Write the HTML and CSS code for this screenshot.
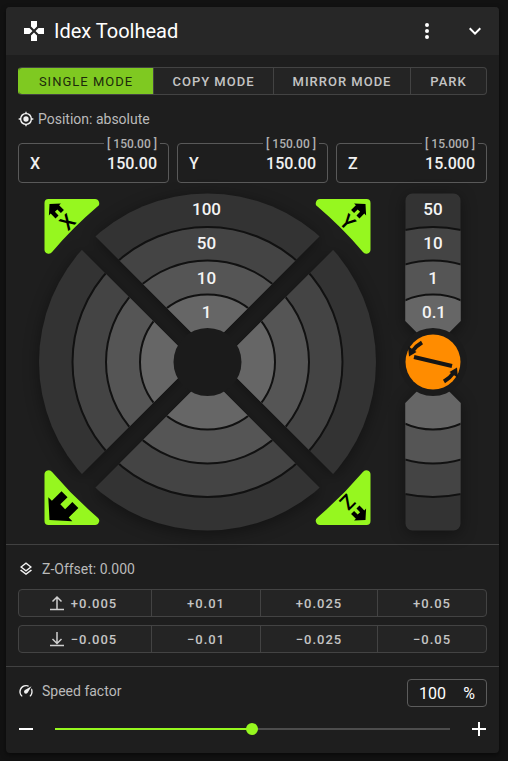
FILE: index.html
```html
<!DOCTYPE html>
<html lang="en">
<head>
<meta charset="utf-8">
<meta name="viewport" content="width=device-width, initial-scale=1">
<title>Idex Toolhead</title>
<link rel="stylesheet" href="styles.css">
</head>
<body>
<main class="card">
  <header class="card-header">
    <svg class="icon-pad" viewBox="0 0 24 24" aria-hidden="true"><path d="M16.5 9 13.5 12l3 3H22V9M9 16.500V22h6v-5.500l-3-3M7.500 9H2v6h5.500l3-3M15 7.500V2H9v5.500l3 3Z"/></svg>
    <h1>Idex Toolhead</h1>
    <button class="icon-btn" type="button" aria-label="More options"><svg viewBox="0 0 24 24"><path d="M12 16a2 2 0 1 1 0 4 2 2 0 0 1 0-4m0-6a2 2 0 1 1 0 4 2 2 0 0 1 0-4m0-6a2 2 0 1 1 0 4 2 2 0 0 1 0-4"/></svg></button>
    <button class="icon-btn" type="button" aria-label="Collapse"><svg viewBox="0 0 24 24"><path d="M7.410 8.580 12 13.170l4.590-4.590L18 10l-6 6-6-6z"/></svg></button>
  </header>

  <section class="section">
    <div class="group modes">
      <button class="active" type="button">SINGLE MODE</button>
      <button type="button">COPY MODE</button>
      <button type="button">MIRROR MODE</button>
      <button type="button">PARK</button>
    </div>
    <p class="caption position">
      <svg viewBox="0 0 24 24" aria-hidden="true"><path d="M12 8a4 4 0 1 0 0 8 4 4 0 0 0 0-8m-8.950 5H1v-2h2.050A9 9 0 0 1 11 3.050V1h2v2.050A9 9 0 0 1 20.950 11H23v2h-2.050A9 9 0 0 1 13 20.950V23h-2v-2.050A9 9 0 0 1 3.050 13M12 5a7 7 0 1 0 0 14 7 7 0 0 0 0-14"/></svg>
      Position: absolute
    </p>
    <div class="fields">
      <label class="field"><span>X</span><input value="150.00"><small>[ 150.00 ]</small></label>
      <label class="field"><span>Y</span><input value="150.00"><small>[ 150.00 ]</small></label>
      <label class="field"><span>Z</span><input value="15.000"><small>[ 15.000 ]</small></label>
    </div>

    <div class="jog">
      <svg class="jog-xy" viewBox="-169.500 -170 339 340" role="group" aria-label="X and Y jog control">
        <defs>
          <clipPath id="wedge"><path d="M0-13.500-160-173.500H160Z"/></clipPath>
          <g id="rings">
            <g clip-path="url(#wedge)">
              <circle class="ring ring-4" r="168.500"/>
              <circle class="ring ring-3" r="135"/>
              <circle class="ring ring-2" r="101.500"/>
              <circle class="ring ring-1" r="67.500"/>
            </g>
          </g>
          <path id="corner" d="M-163-159a4 4 0 0 1 4-4h46.500a4.200 4.200 0 0 1 2.500 7.600A400 400 0 0 0-155.400-110a4.200 4.200 0 0 1-7.600-2.500Z"/>
          <path id="home" d="M10 20v-6h4v6h5v-8h3L12 3 2 12h3v8Z"/>
        </defs>
        <g class="shadow">
          <use href="#rings"/>
          <use href="#rings" transform="rotate(90)"/>
          <use href="#rings" transform="rotate(180)"/>
          <use href="#rings" transform="rotate(270)"/>
        </g>
        <circle class="hole" r="34"/>
        <g class="steps">
          <text x="-1" y="-147">100</text>
          <text x="-1" y="-113">50</text>
          <text x="-1" y="-78">10</text>
          <text x="-1" y="-44">1</text>
        </g>
        <g class="homing" role="button" aria-label="Home X">
          <use class="corner" href="#corner"/>
          <use href="#home" transform="translate(-158 -158) rotate(-45) scale(.85) translate(-12 -3)"/>
          <text transform="translate(-140 -140) rotate(-45)" y="7">X</text>
        </g>
        <g class="homing" role="button" aria-label="Home Y">
          <use class="corner" href="#corner" transform="rotate(90)"/>
          <use href="#home" transform="translate(158 -158) rotate(45) scale(.85) translate(-12 -3)"/>
          <text transform="translate(140 -140) rotate(45)" y="7">Y</text>
        </g>
        <g class="homing" role="button" aria-label="Home Z">
          <use class="corner" href="#corner" transform="rotate(180)"/>
          <use href="#home" transform="translate(158 158) rotate(135) scale(.85) translate(-12 -3)"/>
          <text transform="translate(140 140) rotate(135)" y="7">Z</text>
        </g>
        <g class="homing" role="button" aria-label="Home all">
          <use class="corner" href="#corner" transform="rotate(270)"/>
          <use href="#home" transform="translate(-158 158) rotate(225) scale(1.700) translate(-12 -3)"/>
        </g>
      </svg>

      <svg class="jog-z" viewBox="-29 -170 63 340" role="group" aria-label="Z jog control">
        <defs>
          <clipPath id="column"><path d="M0-13.500-27.500-41V-161.500a7 7 0 0 1 7-7h41a7 7 0 0 1 7 7V-41Z"/></clipPath>
          <g id="column-steps">
            <g clip-path="url(#column)">
              <rect class="ring ring-4" x="-30" y="-169" width="60" height="169"/>
              <circle class="ring ring-3" r="135"/>
              <circle class="ring ring-2" r="101.500"/>
              <circle class="ring ring-1" r="67.500"/>
            </g>
          </g>
        </defs>
        <g class="shadow">
          <use href="#column-steps"/>
          <use href="#column-steps" transform="rotate(180)"/>
        </g>
        <circle class="hole" r="34"/>
        <g class="steps">
          <text y="-147">50</text>
          <text y="-113">10</text>
          <text y="-78">1</text>
          <text x="1" y="-44">0.1</text>
        </g>
        <g class="tilt" role="button" aria-label="Z tilt adjust">
          <circle r="27.500"/>
          <path class="bar" d="M-19-5 19 4"/>
          <g id="turn">
            <path class="curve" d="M-11-19.500Q-17-16-20-11.500"/>
            <path class="head" d="M-25-16-16.500-10-24-5.500Z"/>
          </g>
          <use href="#turn" transform="rotate(180)"/>
        </g>
      </svg>
    </div>
  </section>

  <section class="section offsets">
    <p class="caption">
      <svg viewBox="0 0 24 24" aria-hidden="true"><path d="M12 18.540 19.370 12.800 21 14.070l-9 7-9-7 1.620-1.260zM12 16 3 9l9-7 9 7zm0-11.470L6.260 9 12 13.470 17.740 9z"/></svg>
      Z-Offset: 0.000
    </p>
    <div class="group steps-row">
      <button type="button"><svg viewBox="0 0 16 16" aria-hidden="true"><path d="M1 14.500h14M8 14V2M3.500 6.500 8 2l4.500 4.500"/></svg>+0.005</button>
      <button type="button">+0.01</button>
      <button type="button">+0.025</button>
      <button type="button">+0.05</button>
    </div>
    <div class="group steps-row">
      <button type="button"><svg viewBox="0 0 16 16" aria-hidden="true"><path d="M1 14.500h14M8 1v11.500M3.500 8 8 12.500 12.500 8"/></svg>−0.005</button>
      <button type="button">−0.01</button>
      <button type="button">−0.025</button>
      <button type="button">−0.05</button>
    </div>
  </section>

  <section class="section speed">
    <div class="speed-head">
      <label class="caption" for="speed-value">
        <svg viewBox="0 0 24 24" aria-hidden="true"><path d="M12 16a3 3 0 0 1-3-3c0-1.120.610-2.100 1.500-2.610l9.710-5.620-5.530 9.580A3 3 0 0 1 12 16m0-13c1.810 0 3.500.500 4.970 1.320l-2.100 1.210C14 5.190 13 5 12 5a8 8 0 0 0-8 8c0 2.210.890 4.210 2.340 5.650h.010a1 1 0 0 1-1.410 1.420A10 10 0 0 1 12 3m10 10c0 2.760-1.120 5.260-2.930 7.070a1 1 0 0 1-1.410-1.410A8 8 0 0 0 20 13c0-1-.190-2-.540-2.900L20.670 8C21.500 9.500 22 11.180 22 13"/></svg>
        Speed factor
      </label>
      <div class="percent"><input id="speed-value" value="100"><span>%</span></div>
    </div>
    <div class="slider-row">
      <button type="button" aria-label="Decrease"><svg viewBox="0 0 16 16"><path d="M1 8h14"/></svg></button>
      <input type="range" min="1" max="200" value="100" aria-label="Speed factor">
      <button type="button" aria-label="Increase"><svg viewBox="0 0 16 16"><path d="M1 8h14M8 1v14"/></svg></button>
    </div>
  </section>
</main>
</body>
</html>
```

FILE: styles.css
```css
* {
  box-sizing: border-box;
}

body {
  margin: 0;
  padding: 7px 9px 8px 6px;
  background: #121212;
  color: #fff;
  font-family: Roboto, sans-serif;
  font-size: 14px;
}

button,
input {
  margin: 0;
  padding: 0;
  border: 0;
  background: none;
  color: inherit;
  font: inherit;
}

button {
  cursor: pointer;
}

.card {
  overflow: hidden;
  border-radius: 4px;
  background: #1e1e1e;
  box-shadow: 0 2px 5px rgba(0, 0, 0, .5);
}

.card-header {
  display: flex;
  align-items: center;
  height: 48px;
  padding: 0 12px 0 16px;
  background: #272727;
}

.card-header h1 {
  flex: 1;
  margin: 0 0 0 8px;
  font-size: 20px;
  font-weight: 400;
}

.icon-pad {
  width: 24px;
  height: 24px;
  fill: #fff;
}

.icon-btn {
  width: 24px;
  height: 24px;
}

.icon-btn + .icon-btn {
  margin-left: 24px;
}

.icon-btn svg {
  display: block;
  fill: #fff;
}

.section {
  padding: 12px;
}

.section + .section {
  border-top: 1px solid #414141;
}

.group {
  display: grid;
  height: 28px;
  overflow: hidden;
  border: 1px solid #434343;
  border-radius: 4px;
  background: #242424;
}

.group button {
  display: flex;
  align-items: center;
  justify-content: center;
  color: #c4c4c4;
  font-size: 13px;
  font-weight: 500;
  letter-spacing: 1px;
}

.group button + button {
  border-left: 1px solid #434343;
}

.modes {
  grid-template-columns: 134fr 120fr 137fr 76fr;
  border-left-color: #7fc921;
}

.group .active {
  margin: -1px 0;
  background: #7fc921;
  color: #1c2a0c;
  font-weight: 400;
}

.caption {
  display: flex;
  align-items: center;
  gap: 8px;
  height: 20px;
  margin: 0;
  color: #bababa;
}

.caption svg {
  width: 16px;
  height: 16px;
  fill: #f0f0f0;
}

.position {
  gap: 4px;
  margin: 14px 0;
}

.fields {
  display: grid;
  grid-template-columns: repeat(3, minmax(0, 1fr));
  gap: 8px;
}

.field {
  position: relative;
  display: flex;
  align-items: center;
  height: 40px;
  padding: 0 11px;
  border: 1px solid #595959;
  border-radius: 4px;
  color: #f0f0f0;
  font-size: 16px;
  font-weight: 500;
}

.field input {
  flex: 1;
  min-width: 0;
  text-align: right;
}

.field small {
  position: absolute;
  top: -8px;
  right: 8px;
  padding: 0 3px;
  background: #1e1e1e;
  color: #b0b0b0;
  font-size: 12px;
  line-height: 16px;
}

.jog {
  display: flex;
  justify-content: center;
  gap: 27px;
  margin-top: 9px;
}

.jog svg {
  display: block;
  height: 340px;
  min-width: 0;
  overflow: visible;
}

.shadow {
  filter: drop-shadow(0 3px 8px rgba(0, 0, 0, .4));
}

.ring {
  stroke: #111;
  stroke-width: 2px;
}

.ring-4 {
  fill: #333;
  stroke: none;
}

.ring-3 {
  fill: #444;
}

.ring-2 {
  fill: #555;
}

.ring-1 {
  fill: #666;
}

.hole {
  fill: #1b1b1b;
}

.steps text {
  fill: #f4f4f4;
  font-size: 17px;
  font-weight: 500;
  text-anchor: middle;
}

.homing text {
  font-size: 20px;
  font-weight: 500;
  text-anchor: middle;
}

.corner {
  fill: #96f71f;
}

.tilt circle {
  fill: #ff8c00;
}

.bar,
.curve {
  fill: none;
  stroke: #151515;
  stroke-width: 4px;
}

.head {
  fill: #151515;
}

.offsets {
  padding: 14px 12px 13px;
}

.steps-row {
  grid-template-columns: 132fr 109fr 117fr 109fr;
  margin-top: 10px;
}

.steps-row + .steps-row {
  margin-top: 8px;
}

.steps-row svg {
  width: 16px;
  height: 16px;
  margin: 0 6px 0 -4px;
  fill: none;
  stroke: #cfcfcf;
  stroke-width: 1.500px;
}

.speed {
  padding-bottom: 14px;
}

.speed-head {
  display: flex;
  align-items: center;
  justify-content: space-between;
}

.speed-head .caption {
  margin-bottom: 4px;
}

.percent {
  display: flex;
  align-items: center;
  width: 80px;
  height: 28px;
  padding: 0 11px;
  border: 1px solid #5c5c5c;
  border-radius: 4px;
  font-size: 16px;
}

.percent input {
  flex: 1;
  min-width: 0;
}

.slider-row {
  display: flex;
  align-items: center;
  gap: 15px;
  height: 20px;
  margin-top: 12px;
}

.slider-row button {
  width: 16px;
  height: 16px;
}

.slider-row svg {
  display: block;
  fill: none;
  stroke: #fff;
  stroke-width: 2px;
}

.slider-row input {
  flex: 1;
  min-width: 0;
  height: 12px;
  padding: 0 6px;
  appearance: none;
}

.slider-row input::-webkit-slider-runnable-track {
  height: 2px;
  background: linear-gradient(to right, #96f71f 50%, #4d4d4d 50%);
}

.slider-row input::-webkit-slider-thumb {
  width: 12px;
  height: 12px;
  margin-top: -5px;
  border-radius: 50%;
  background: #96f71f;
  appearance: none;
}
```
